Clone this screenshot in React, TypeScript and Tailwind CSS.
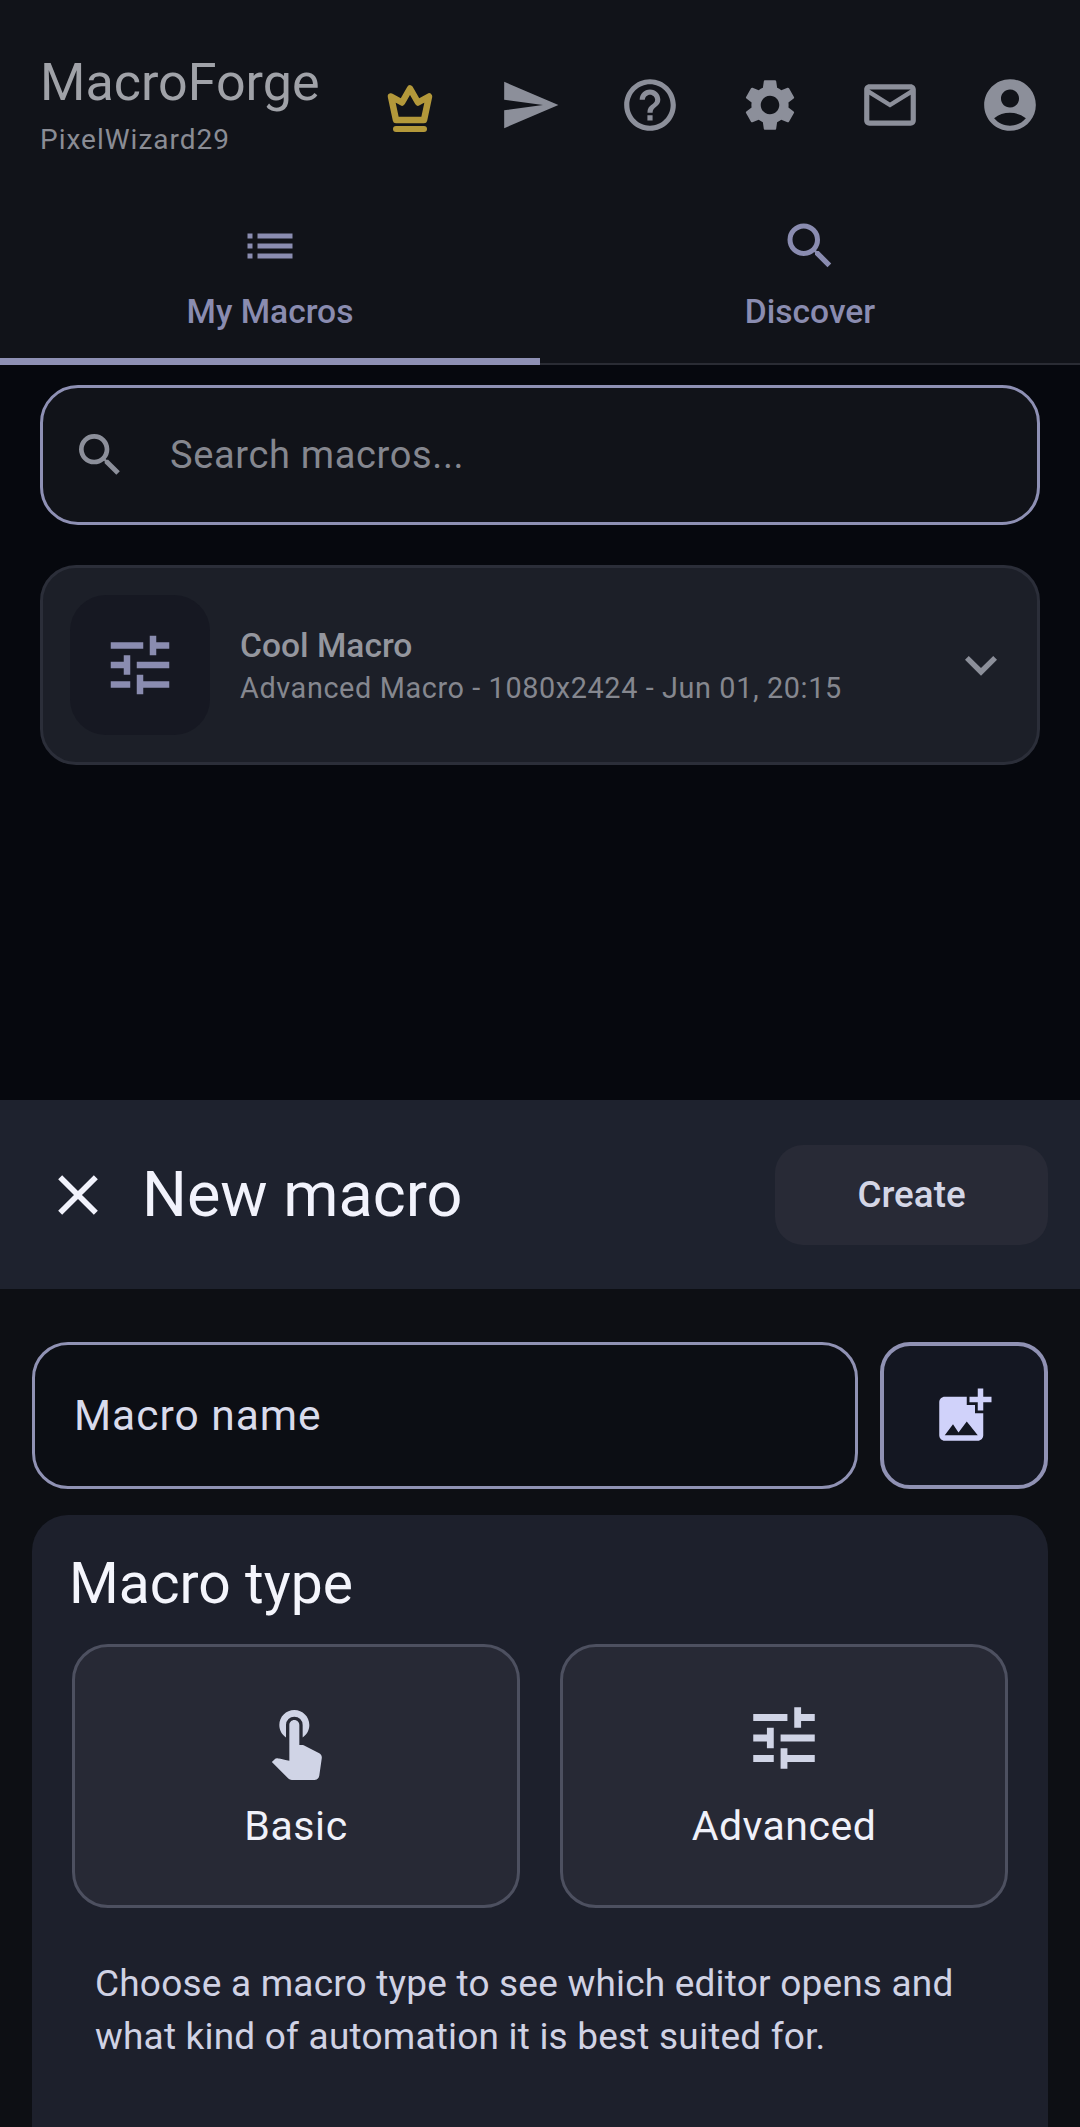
import {
  MdAccountCircle, MdAddPhotoAlternate, MdClose, MdExpandMore, MdList,
  MdMailOutline, MdHelpOutline, MdSearch, MdSend, MdSettings, MdTouchApp, MdTune,
} from "react-icons/md";

function Crown() {
  return (
    <svg viewBox="0 0 60 60" className="w-[60px] h-[60px] text-[#b3983a]" fill="none" stroke="currentColor" strokeWidth="6.500" strokeLinejoin="round">
      <path d="M30 13.500l8 14 11-6-5 23.500H16l-5-23.500 11 6z" />
      <path d="M16 54h28" strokeLinecap="round" strokeWidth="6" />
    </svg>
  );
}

const headerIcons = [MdSend, MdHelpOutline, MdSettings, MdMailOutline, MdAccountCircle];

export default function App() {
  return (
    <div className="h-[2127px] w-[1080px] flex flex-col overflow-hidden bg-[#06080e] font-['Roboto',sans-serif]">
      <div className="h-[1100px] shrink-0 flex flex-col">
        <header className="bg-[#111319] h-[365px] shrink-0 flex flex-col border-b-[2px] border-[#2a2c34]">
          <div className="h-[196px] flex items-start pl-[40px] pt-[54px]">
            <div className="w-[330px] shrink-0">
              <div className="text-[52px] leading-[58px] text-[#a0a2a8]">MacroForge</div>
              <div className="text-[28px] leading-[34px] mt-[11px] tracking-[1px] text-[#8a8c94]">PixelWizard29</div>
            </div>
            <div className="flex items-center h-[66px] mt-[18px]">
              <div className="w-[80px] flex justify-center mr-[20px]"><Crown /></div>
              {headerIcons.map((Icon, i) => (
                <div key={i} className="w-[120px] flex justify-center">
                  <Icon className="w-[62px] h-[62px] text-[#8c8f9a]" />
                </div>
              ))}
            </div>
          </div>
          <div className="flex-1 flex">
            <div className="w-1/2 flex flex-col items-center border-b-[7px] border-[#8e90b4] mb-[-2px]">
              <MdList className="w-[60px] h-[60px] text-[#8a8cb0] mt-[20px]" />
              <span className="text-[33.600px] leading-[40px] font-medium text-[#8a8cb0] mt-[16px]">My Macros</span>
            </div>
            <div className="w-1/2 flex flex-col items-center">
              <MdSearch className="w-[60px] h-[60px] text-[#8a8cb0] mt-[20px]" />
              <span className="text-[33.600px] leading-[40px] font-medium text-[#8a8cb0] mt-[16px]">Discover</span>
            </div>
          </div>
        </header>

        <div className="px-[40px] pt-[20px] flex flex-col gap-[40px]">
          <div className="h-[140px] rounded-[38px] border-[3px] border-[#8e90b4] bg-[#111319] flex items-center pl-[29px]">
            <MdSearch className="w-[56px] h-[56px] text-[#8c8f9a]" />
            <span className="ml-[42px] text-[38px] tracking-[0.65px] text-[#85878f]">Search macros...</span>
          </div>
          <div className="h-[200px] rounded-[36px] border-[3px] border-[#2b2e39] bg-[#1c1f28] flex items-center pl-[27px] pr-[24px]">
            <div className="w-[140px] h-[140px] rounded-[36px] bg-[#161822] flex items-center justify-center shrink-0">
              <MdTune className="w-[78px] h-[78px] text-[#8a8cb0]" />
            </div>
            <div className="ml-[30px] flex-1">
              <div className="text-[33.600px] leading-[40px] mt-[2px] font-medium text-[#94969e]">Cool Macro</div>
              <div className="text-[28.800px] leading-[36px] mt-[4px] tracking-[0.62px] text-[#85878f]">Advanced Macro - 1080x2424 - Jun 01, 20:15</div>
            </div>
            <MdExpandMore className="w-[64px] h-[64px] text-[#8c8f9a]" />
          </div>
        </div>
      </div>

      <div className="flex-1 flex flex-col bg-[#0d0f14] min-h-0">
        <div className="h-[189px] bg-[#1e222e] shrink-0 flex items-center pl-[44px] pr-[32px]">
          <MdClose className="w-[68px] h-[68px] text-[#f2f3fc]" />
          <span className="ml-[30px] flex-1 text-[63px] leading-[70px] text-[#f2f3fc]">New macro</span>
          <button className="w-[273px] h-[100px] rounded-[28px] bg-[#282a36] text-[36.800px] font-medium text-[#d4d6e6]">Create</button>
        </div>

        <div className="flex-1 px-[32px] pt-[53px] flex flex-col gap-[26px] min-h-0">
          <div className="flex gap-[22px] h-[147px] shrink-0">
            <div className="flex-1 rounded-[36px] border-[3px] border-[#9092b4] bg-[#0c0e14] flex items-center pl-[39px]">
              <span className="text-[42.500px] tracking-[1px] text-[#d9dbec]">Macro name</span>
            </div>
            <div className="w-[168px] rounded-[30px] border-[4px] border-[#9092b4] bg-[#141722] flex items-center justify-center">
              <MdAddPhotoAlternate className="w-[66px] h-[66px] text-[#d0d2fa]" />
            </div>
          </div>

          <div className="flex-1 rounded-t-[36px] bg-[#1d202c] pl-[38px] pr-[40px] pt-[37px]">
            <div className="text-[57px] leading-[64px] text-[#f4f5fc] ml-[-1px]">Macro type</div>
            <div className="grid grid-cols-2 gap-[40px] mt-[28px] pl-[2px]">
              <div className="h-[264px] rounded-[36px] border-[3px] border-[#4d5060] bg-[#272935] flex flex-col items-center">
                <MdTouchApp className="w-[80px] h-[80px] text-[#d0d4e6] mt-[53px]" />
                <span className="text-[41px] leading-[48px] tracking-[0.6px] text-[#f0f1fa] mt-[22px]">Basic</span>
              </div>
              <div className="h-[264px] rounded-[36px] border-[3px] border-[#4d5060] bg-[#272935] flex flex-col items-center">
                <MdTune className="w-[82px] h-[82px] text-[#d0d4e6] mt-[50px]" />
                <span className="text-[41px] leading-[48px] tracking-[0.5px] text-[#f0f1fa] mt-[23px]">Advanced</span>
              </div>
            </div>
            <p className="mt-[49px] pl-[25px] text-[37px] leading-[53px] tracking-[0.2px] text-[#d0d2e4]">
              Choose a macro type to see which editor opens and what kind of automation it is best suited for.
            </p>
          </div>
        </div>
      </div>
    </div>
  );
}
